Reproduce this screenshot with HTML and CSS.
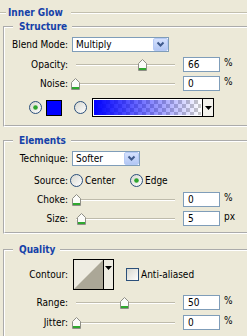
FILE: index.html
```html
<!DOCTYPE html>
<html>
<head>
<meta charset="utf-8">
<link rel="stylesheet" href="styles.css">
</head>
<body>
<div class="panel">
  <div class="head"><span class="hl short"></span><span class="htitle">Inner Glow</span><span class="hl grow"></span></div>

  <fieldset class="grp g-struct">
    <legend>Structure</legend>
    <div class="row r-first">
      <span class="lbl">Blend Mode:</span>
      <div class="combo w-blend"><span class="ctext">Multiply</span><span class="cbtn"><svg width="13" height="11" viewBox="0 0 13 11"><path d="M3.5 3.5 L6.5 6.5 L9.5 3.5" stroke="#3F5A8C" stroke-width="2" fill="none"/></svg></span></div>
    </div>
    <div class="row r-next5">
      <span class="lbl">Opacity:</span>
      <div class="slider"><span class="track"></span><span class="thumb" style="left:66px"><svg width="9" height="12" viewBox="0 0 9 12"><path d="M0.5 4.5 L4.5 0.5 L8.5 4.5 V11.5 H0.5 Z" fill="#FBFBF8" stroke="#8E8E86"/><rect x="1" y="9" width="7" height="2" fill="#2FA82F"/></svg></span></div>
      <span class="num">66</span><span class="unit">%</span>
    </div>
    <div class="row r-next4">
      <span class="lbl">Noise:</span>
      <div class="slider"><span class="track"></span><span class="thumb" style="left:-1px"><svg width="9" height="12" viewBox="0 0 9 12"><path d="M0.5 4.5 L4.5 0.5 L8.5 4.5 V11.5 H0.5 Z" fill="#FBFBF8" stroke="#8E8E86"/><rect x="1" y="9" width="7" height="2" fill="#2FA82F"/></svg></span></div>
      <span class="num">0</span><span class="unit">%</span>
    </div>
    <div class="row r-color">
      <svg class="radio" width="13" height="13" viewBox="0 0 13 13"><defs><linearGradient id="ra" x1="0" y1="0" x2="1" y2="1"><stop offset="0" stop-color="#D6D6CE"/><stop offset="1" stop-color="#FFFFFF"/></linearGradient></defs><circle cx="6.5" cy="6.5" r="6" fill="url(#ra)" stroke="#2B4F7A"/><circle cx="6.5" cy="6.5" r="2.3" fill="#2DA52D"/></svg>
      <span class="swatch"></span>
      <svg class="radio radio2" width="13" height="13" viewBox="0 0 13 13"><defs><linearGradient id="rb" x1="0" y1="0" x2="1" y2="1"><stop offset="0" stop-color="#D6D6CE"/><stop offset="1" stop-color="#FFFFFF"/></linearGradient></defs><circle cx="6.5" cy="6.5" r="6" fill="url(#rb)" stroke="#2B4F7A"/></svg>
      <div class="gradbox"><span class="gradfill"></span><span class="garrow"><svg width="7" height="4" viewBox="0 0 7 4"><path d="M0 0 H7 L3.5 4 Z" fill="#000"/></svg></span></div>
    </div>
  </fieldset>

  <fieldset class="grp g-elem">
    <legend>Elements</legend>
    <div class="row r-first">
      <span class="lbl">Technique:</span>
      <div class="combo w-tech"><span class="ctext">Softer</span><span class="cbtn"><svg width="13" height="11" viewBox="0 0 13 11"><path d="M3.5 3.5 L6.5 6.5 L9.5 3.5" stroke="#3F5A8C" stroke-width="2" fill="none"/></svg></span></div>
    </div>
    <div class="row r-source">
      <span class="lbl lbl-src">Source:</span>
      <span class="opt opt1"><svg class="radio" width="13" height="13" viewBox="0 0 13 13"><defs><linearGradient id="rc" x1="0" y1="0" x2="1" y2="1"><stop offset="0" stop-color="#D6D6CE"/><stop offset="1" stop-color="#FFFFFF"/></linearGradient></defs><circle cx="6.5" cy="6.5" r="6" fill="url(#rc)" stroke="#2B4F7A"/></svg><span>Center</span></span>
      <span class="opt"><svg class="radio" width="13" height="13" viewBox="0 0 13 13"><defs><linearGradient id="rd" x1="0" y1="0" x2="1" y2="1"><stop offset="0" stop-color="#D6D6CE"/><stop offset="1" stop-color="#FFFFFF"/></linearGradient></defs><circle cx="6.5" cy="6.5" r="6" fill="url(#rd)" stroke="#2B4F7A"/><circle cx="6.5" cy="6.5" r="2.3" fill="#2DA52D"/></svg><span>Edge</span></span>
    </div>
    <div class="row r-next4">
      <span class="lbl">Choke:</span>
      <div class="slider"><span class="track"></span><span class="thumb" style="left:0px"><svg width="9" height="12" viewBox="0 0 9 12"><path d="M0.5 4.5 L4.5 0.5 L8.5 4.5 V11.5 H0.5 Z" fill="#FBFBF8" stroke="#8E8E86"/><rect x="1" y="9" width="7" height="2" fill="#2FA82F"/></svg></span></div>
      <span class="num">0</span><span class="unit">%</span>
    </div>
    <div class="row r-next4">
      <span class="lbl">Size:</span>
      <div class="slider"><span class="track"></span><span class="thumb" style="left:5px"><svg width="9" height="12" viewBox="0 0 9 12"><path d="M0.5 4.5 L4.5 0.5 L8.5 4.5 V11.5 H0.5 Z" fill="#FBFBF8" stroke="#8E8E86"/><rect x="1" y="9" width="7" height="2" fill="#2FA82F"/></svg></span></div>
      <span class="num">5</span><span class="unit">px</span>
    </div>
  </fieldset>

  <fieldset class="grp g-qual">
    <legend>Quality</legend>
    <div class="row r-contour">
      <span class="lbl lbl-ct">Contour:</span>
      <div class="contour">
        <span class="cprev"><svg width="29" height="29" viewBox="0 0 29 29"><path d="M0 29 L29 0 V29 Z" fill="#ABA797"/></svg></span>
        <span class="carrow"><svg width="7" height="4" viewBox="0 0 7 4"><path d="M0 0 H7 L3.5 4 Z" fill="#000"/></svg></span>
      </div>
      <svg class="check" width="13" height="13" viewBox="0 0 13 13"><defs><linearGradient id="ck" x1="0" y1="0" x2="1" y2="1"><stop offset="0" stop-color="#D6D6CE"/><stop offset="1" stop-color="#FFFFFF"/></linearGradient></defs><rect x="0.5" y="0.5" width="12" height="12" fill="url(#ck)" stroke="#2B4F7A"/></svg>
      <span class="cklbl">Anti-aliased</span>
    </div>
    <div class="row r-next5">
      <span class="lbl">Range:</span>
      <div class="slider"><span class="track"></span><span class="thumb" style="left:48px"><svg width="9" height="12" viewBox="0 0 9 12"><path d="M0.5 4.5 L4.5 0.5 L8.5 4.5 V11.5 H0.5 Z" fill="#FBFBF8" stroke="#8E8E86"/><rect x="1" y="9" width="7" height="2" fill="#2FA82F"/></svg></span></div>
      <span class="num">50</span><span class="unit">%</span>
    </div>
    <div class="row r-next5">
      <span class="lbl">Jitter:</span>
      <div class="slider"><span class="track"></span><span class="thumb" style="left:0px"><svg width="9" height="12" viewBox="0 0 9 12"><path d="M0.5 4.5 L4.5 0.5 L8.5 4.5 V11.5 H0.5 Z" fill="#FBFBF8" stroke="#8E8E86"/><rect x="1" y="9" width="7" height="2" fill="#2FA82F"/></svg></span></div>
      <span class="num">0</span><span class="unit">%</span>
    </div>
  </fieldset>
</div>
</body>
</html>
```

FILE: styles.css
```css
* { box-sizing: border-box; }
html, body { margin: 0; padding: 0; }
body {
  background: #ECE9D8;
  font-family: "DejaVu Sans Condensed", "Liberation Sans", sans-serif;
  font-size: 10px;
  color: #000;
  width: 247px;
  height: 336px;
  overflow: hidden;
}
.panel { width: 247px; height: 336px; overflow: hidden; }

.head { display: flex; align-items: center; height: 14px; margin-top: 6px; }
.hl { height: 2px; border-top: 1px solid #C2BFAE; border-bottom: 1px solid #FFFFFF; }
.short { width: 6px; }
.grow { flex: 1; }
.htitle { font-weight: bold; color: #1541A9; padding: 0 8px 0 2px; line-height: 14px; }

.grp {
  margin: 0 0 0 3px;
  padding: 0;
  min-width: 0;
  border: 2px groove #FFFFFF;
  border-right: none;
}
.grp legend {
  font-weight: bold;
  color: #1541A9;
  line-height: 14px;
  padding: 0 5px 0 6px;
  margin-left: 8px;
}
.g-struct { padding-bottom: 8px; }
.g-elem { margin-top: 7px; padding-bottom: 6px; }
.g-qual { margin-top: 9px; border-bottom: none; height: 93px; }

.row { display: flex; align-items: center; height: 15px; line-height: 12px; }
.r-first { margin-top: 3px; }
.r-next4 { margin-top: 4px; }
.r-next5 { margin-top: 5px; }
.lbl { width: 63px; flex: none; text-align: right; margin-right: 4px; }

.combo {
  display: flex;
  height: 15px;
  border: 1px solid #7F9DB9;
  background: #FFFFFF;
  flex: none;
}
.w-blend { width: 97px; }
.w-tech { width: 68px; }
.ctext { flex: 1; padding-left: 3px; line-height: 13px; }
.cbtn {
  width: 15px;
  border: 1px solid #B6CAF5;
  border-radius: 2px;
  background: linear-gradient(#D5E1FD, #B3C7F4);
  display: flex;
  align-items: center;
  justify-content: center;
}

.slider { position: relative; width: 108px; height: 15px; flex: none; }
.track {
  position: absolute;
  left: 4px;
  right: 5px;
  top: 7px;
  height: 2px;
  border-top: 1px solid #BEBBAB;
  border-bottom: 1px solid #FFFFFF;
}
.thumb { position: absolute; top: 2px; width: 9px; height: 12px; display: block; }
.thumb svg { display: block; }

.num {
  width: 37px;
  height: 15px;
  margin-left: 3px;
  border: 1px solid #7F9DB9;
  background: #FFFFFF;
  padding-left: 4px;
  line-height: 13px;
  flex: none;
}
.unit { margin-left: 4px; align-self: flex-start; line-height: 12px; }

.r-color { height: 19px; margin-top: 7px; padding-left: 24px; }
.radio { display: block; flex: none; }
.swatch { width: 16px; height: 16px; margin-left: 4px; border: 1px solid #000; background: #0000FF; flex: none; }
.radio2 { margin-left: 12px; }
.gradbox {
  margin-left: 5px;
  width: 122px;
  height: 19px;
  border: 1px solid #000;
  display: flex;
  flex: none;
}
.gradfill {
  flex: 1;
  border: 1px solid #FFFFFF;
  background:
    linear-gradient(to right, #0000FF, rgba(0, 0, 255, 0)),
    repeating-conic-gradient(#C8C8C8 0 25%, #FFFFFF 0 50%) 0 0 / 8px 8px;
}
.garrow {
  width: 11px;
  border-left: 1px solid #000;
  background: #F3F2EC;
  display: flex;
  align-items: center;
  justify-content: center;
}

.r-source { margin-top: 7px; }
.lbl-src { margin-right: 2px; }
.opt { display: flex; align-items: center; gap: 2px; }
.opt1 { width: 60px; }

.r-contour { height: 31px; margin-top: 2px; }
.lbl-ct { margin-right: 5px; }
.contour {
  width: 41px;
  height: 31px;
  border: 1px solid #000;
  background: #EEECE2;
  display: flex;
  flex: none;
}
.cprev { width: 29px; height: 29px; display: block; }
.cprev svg { display: block; }
.carrow {
  flex: 1;
  border-left: 1px solid #000;
  display: flex;
  justify-content: center;
  padding-top: 6px;
}
.carrow svg { display: block; }
.check { display: block; flex: none; margin-left: 12px; }
.cklbl { margin-left: 2px; }
```
